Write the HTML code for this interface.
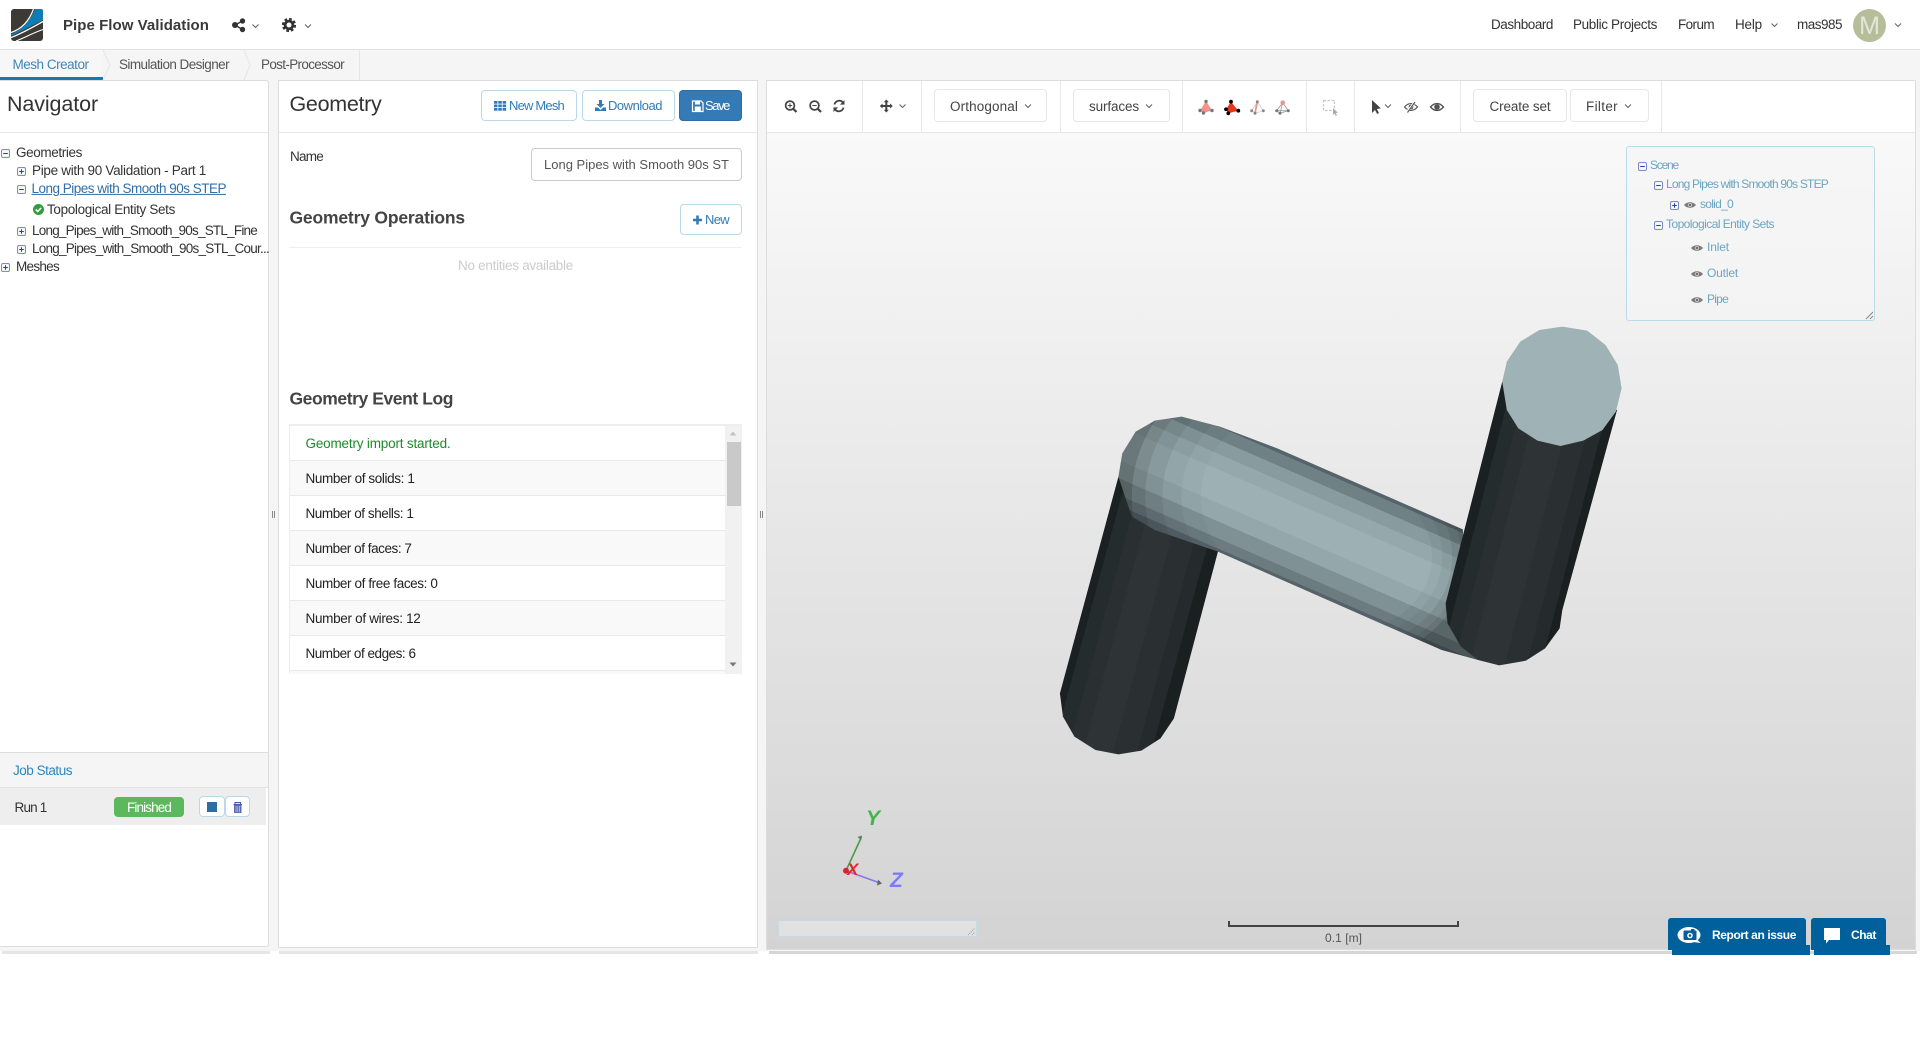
<!DOCTYPE html>
<html lang="en"><head><meta charset="utf-8"><title>Pipe Flow Validation</title>
<style>
html,body{margin:0;padding:0;background:#fff}
body{width:1920px;height:1040px;position:relative;overflow:hidden;font-family:"Liberation Sans",Arial,sans-serif;font-size:13.5px;color:#333}
.b{position:absolute;box-sizing:border-box}
.t{position:absolute;white-space:nowrap;transform:translateY(calc(-50% + 1px));line-height:1.2}
.t.n{transform:translateY(-50%)}
.btn{position:absolute;box-sizing:border-box;border:1px solid #b9d9ea;border-radius:4px;background:#fff}
.tb{position:absolute;box-sizing:border-box;border:1px solid #e8e8e8;border-radius:4px;background:#fff;top:89px;height:33px}
.blue{color:#337ab7}.st{color:#6ba5c1;font-size:12px}
.lr{position:absolute;left:290px;width:435px;height:35px;box-sizing:border-box;border-bottom:1px solid #e8e8e8}
input{position:absolute;box-sizing:border-box;left:531px;top:148px;width:211px;height:33px;border:1px solid #ccc;border-radius:4px;padding:0 0 0 12px;font:13px "Liberation Sans",Arial,sans-serif;color:#555;background:#fff;outline:0}
svg{display:block}
</style></head><body>

<!-- background zones -->
<div class="b" style="left:0;top:50px;width:1920px;height:901px;background:#f5f5f5"></div>
<div class="b" style="left:0;top:0;width:1920px;height:50px;background:#fff;border-bottom:1px solid #e3e3e3"></div>
<div class="b" style="left:0;top:50px;width:103px;height:30px;background:#f7f7f7;border-bottom:3px solid #1a78b0"></div>
<div class="b" style="left:244px;top:50px;width:1px;height:30px;background:#e6e6e6"></div>
<div class="b" style="left:359px;top:50px;width:1px;height:30px;background:#e6e6e6"></div>
<div class="b" style="left:103px;top:50px;width:1px;height:30px;background:#e6e6e6"></div>

<!-- panels -->
<div class="b" style="left:-2px;top:80px;width:271px;height:867px;background:#fff;border:1px solid #ddd;border-radius:3px"></div>
<div class="b" style="left:0;top:132px;width:268px;height:1px;background:#e8e8e8"></div>
<div class="b" style="left:278px;top:80px;width:480px;height:868px;background:#fff;border:1px solid #ddd"></div>
<div class="b" style="left:279px;top:132px;width:478px;height:1px;background:#e8e8e8"></div>
<div class="b" style="left:766px;top:80px;width:1150px;height:870px;background:#fff;border:1px solid #ddd"></div>
<div class="b" style="left:767px;top:132px;width:1148px;height:817px;background:linear-gradient(#f9f9f9,#d3d3d3);border-top:1px solid #e6e6e6"></div>
<div class="b" style="left:2px;top:951px;width:268px;height:3px;background:#e6e6e6"></div>
<div class="b" style="left:279px;top:951px;width:479px;height:3px;background:#e6e6e6"></div>
<div class="b" style="left:769px;top:951px;width:1148px;height:3px;background:#d6d6d6"></div>

<!-- header text -->
<span class="t" style="left:63px;top:25px;font-size:15px;font-weight:bold;color:#3a3a3a" data-w="146">Pipe Flow Validation</span>
<span class="t n" style="left:1491px;top:25px" data-w="62">Dashboard</span>
<span class="t n" style="left:1573px;top:25px" data-w="84">Public Projects</span>
<span class="t n" style="left:1678px;top:25px" data-w="36">Forum</span>
<span class="t n" style="left:1735px;top:25px" data-w="27">Help</span>
<span class="t n" style="left:1797px;top:25px" data-w="45">mas985</span>
<div class="b" style="left:1853px;top:9px;width:33px;height:33px;border-radius:50%;background:#b5bd9b;color:#e4e7d8;font-size:25px;line-height:34px;text-align:center">M</div>

<!-- tabs -->
<span class="t" style="left:12.5px;top:64px;color:#3f86b8" data-w="76">Mesh Creator</span>
<span class="t" style="left:119px;top:64px;color:#555" data-w="110">Simulation Designer</span>
<span class="t" style="left:261px;top:64px;color:#555" data-w="83">Post-Processor</span>

<!-- navigator -->
<span class="t n" style="left:7px;top:105px;font-size:21.5px;color:#333" data-w="91">Navigator</span>
<span class="t" style="left:16px;top:152px" data-w="66">Geometries</span>
<span class="t" style="left:32px;top:170px" data-w="174">Pipe with 90 Validation - Part 1</span>
<span class="t" style="left:31.5px;top:188px;color:#2f6fa7;text-decoration:underline" data-w="194.5">Long Pipes with Smooth 90s STEP</span>
<span class="t" style="left:47px;top:209px" data-w="128">Topological Entity Sets</span>
<span class="t" style="left:32px;top:230px" data-w="225">Long_Pipes_with_Smooth_90s_STL_Fine</span>
<span class="t" style="left:32px;top:248px" data-w="237">Long_Pipes_with_Smooth_90s_STL_Cour...</span>
<span class="t" style="left:16px;top:266px" data-w="43">Meshes</span>

<!-- job status -->
<div class="b" style="left:0;top:752px;width:268px;height:36px;background:#f5f5f5;border-top:1px solid #ddd;border-bottom:1px solid #e3e3e3"></div>
<span class="t" style="left:13px;top:770px;color:#2a86bd" data-w="59">Job Status</span>
<div class="b" style="left:0;top:788px;width:266px;height:37px;background:#eee"></div>
<span class="t" style="left:14.5px;top:806.5px" data-w="32">Run 1</span>
<div class="b" style="left:114px;top:797px;width:70px;height:20px;background:#5cb85c;border-radius:4px"></div>
<span class="t" style="left:127px;top:806.5px;color:#fff" data-w="44">Finished</span>
<div class="btn" style="left:199px;top:796px;width:26px;height:21px"></div>
<div class="btn" style="left:225px;top:796px;width:25px;height:21px"></div>
<div class="b" style="left:207px;top:802px;width:10px;height:10px;background:#2e6da4"></div>

<!-- geometry panel -->
<span class="t n" style="left:289.5px;top:105px;font-size:21.5px;color:#333" data-w="92">Geometry</span>
<div class="btn" style="left:481px;top:90px;width:96px;height:31px"></div>
<span class="t blue n" style="left:509px;top:106px;font-size:13px" data-w="55">New Mesh</span>
<div class="btn" style="left:582px;top:90px;width:93px;height:31px"></div>
<span class="t blue n" style="left:608px;top:106px;font-size:13px" data-w="54">Download</span>
<div class="btn" style="left:679px;top:90px;width:63px;height:31px;background:#337ab7;border-color:#2e6da4"></div>
<span class="t n" style="left:705px;top:106px;font-size:13px;color:#fff" data-w="24">Save</span>
<span class="t" style="left:290px;top:156px" data-w="33">Name</span>
<input type="text" value="Long Pipes with Smooth 90s ST" readonly>
<span class="t" style="left:289.5px;top:217px;font-size:17.5px;font-weight:bold;color:#444" data-w="175.5">Geometry Operations</span>
<div class="btn" style="left:680px;top:204px;width:62px;height:31px"></div>
<span class="t blue n" style="left:705px;top:220px;font-size:13px" data-w="24">New</span>
<div class="b" style="left:289px;top:247px;width:453px;height:1px;background:#eee"></div>
<span class="t" style="left:458px;top:265px;color:#ccc" data-w="115">No entities available</span>
<span class="t" style="left:289.5px;top:398px;font-size:17.5px;font-weight:bold;color:#444" data-w="163.5">Geometry Event Log</span>

<!-- log list -->
<div class="b" style="left:289px;top:424px;width:453px;height:250px;background:#f1f1f1;border-top:2px solid #eee;border-left:1px solid #eee;overflow:hidden">
<div class="lr" style="left:0;top:0;background:#fff"></div>
<div class="lr" style="left:0;top:35px;background:#f9f9f9"></div>
<div class="lr" style="left:0;top:70px;background:#fff"></div>
<div class="lr" style="left:0;top:105px;background:#f9f9f9"></div>
<div class="lr" style="left:0;top:140px;background:#fff"></div>
<div class="lr" style="left:0;top:175px;background:#f9f9f9"></div>
<div class="lr" style="left:0;top:210px;background:#fff"></div>
<div class="lr" style="left:0;top:245px;background:#f9f9f9"></div>
<div class="b" style="left:437px;top:16px;width:14px;height:64px;background:#c9c9c9"></div>
</div>
<span class="t" style="left:305.5px;top:443px;color:#1e8a2e" data-w="145">Geometry import started.</span>
<span class="t" style="left:305.5px;top:478px;color:#222" data-w="109">Number of solids: 1</span>
<span class="t" style="left:305.5px;top:513px;color:#222" data-w="108">Number of shells: 1</span>
<span class="t" style="left:305.5px;top:548px;color:#222" data-w="106">Number of faces: 7</span>
<span class="t" style="left:305.5px;top:583px;color:#222" data-w="132">Number of free faces: 0</span>
<span class="t" style="left:305.5px;top:618px;color:#222" data-w="115">Number of wires: 12</span>
<span class="t" style="left:305.5px;top:653px;color:#222" data-w="110">Number of edges: 6</span>

<!-- toolbar -->
<div class="b" style="left:862px;top:81px;width:1px;height:51px;background:#e8e8e8"></div>
<div class="b" style="left:921px;top:81px;width:1px;height:51px;background:#e8e8e8"></div>
<div class="b" style="left:1060px;top:81px;width:1px;height:51px;background:#e8e8e8"></div>
<div class="b" style="left:1182px;top:81px;width:1px;height:51px;background:#e8e8e8"></div>
<div class="b" style="left:1306px;top:81px;width:1px;height:51px;background:#e8e8e8"></div>
<div class="b" style="left:1354px;top:81px;width:1px;height:51px;background:#e8e8e8"></div>
<div class="b" style="left:1460px;top:81px;width:1px;height:51px;background:#e8e8e8"></div>
<div class="b" style="left:1661px;top:81px;width:1px;height:51px;background:#e8e8e8"></div>
<div class="tb" style="left:934px;width:113px"></div>
<span class="t" style="left:950px;top:106px;color:#444" data-w="68">Orthogonal</span>
<div class="tb" style="left:1073px;width:97px"></div>
<span class="t" style="left:1089px;top:106px;color:#444" data-w="50">surfaces</span>
<div class="tb" style="left:1473px;width:94px"></div>
<span class="t" style="left:1489.5px;top:106px;color:#444" data-w="61">Create set</span>
<div class="tb" style="left:1570px;width:79px"></div>
<span class="t" style="left:1586px;top:106px;color:#444" data-w="32">Filter</span>

<!-- scene tree box -->
<div class="b" style="left:1625.5px;top:146px;width:249px;height:175px;border:1px solid #b8dce8;border-radius:3px;background:rgba(245,245,245,.6)"></div>
<span class="t st n" style="left:1650px;top:165px" data-w="28">Scene</span>
<span class="t st n" style="left:1666px;top:184px" data-w="162">Long Pipes with Smooth 90s STEP</span>
<span class="t st n" style="left:1700px;top:204px" data-w="33">solid_0</span>
<span class="t st n" style="left:1666px;top:224px" data-w="108">Topological Entity Sets</span>
<span class="t st n" style="left:1707px;top:247px" data-w="22">Inlet</span>
<span class="t st n" style="left:1707px;top:273px" data-w="31">Outlet</span>
<span class="t st n" style="left:1707px;top:299px" data-w="21">Pipe</span>

<!-- lower-left text box in viewport -->
<div class="b" style="left:778px;top:920px;width:199px;height:17px;background:#e1e1e1;border:1px solid #c6dbe3"></div>

<!-- scale -->
<span class="t n" style="left:1325px;top:938px;font-size:12px;color:#555" data-w="37">0.1 [m]</span>

<!-- report buttons -->
<div class="b" style="left:1672px;top:945px;width:138px;height:10px;background:#00609c"></div>
<div class="b" style="left:1668px;top:918px;width:138px;height:32px;background:#00609c;border-radius:3px 3px 0 0"></div>
<div class="b" style="left:1814px;top:945px;width:76px;height:10px;background:#00609c"></div>
<div class="b" style="left:1811px;top:918px;width:75px;height:32px;background:#00609c;border-radius:3px 3px 0 0"></div>
<span class="t n" style="left:1712px;top:935px;font-size:12px;font-weight:bold;color:#fff" data-w="84">Report an issue</span>
<span class="t n" style="left:1851px;top:935px;font-size:12px;font-weight:bold;color:#fff" data-w="25">Chat</span>

<!-- graphics layer -->
<svg width="1920" height="1040" viewBox="0 0 1920 1040" style="position:absolute;left:0;top:0;pointer-events:none">
<defs>
<g id="pl"><rect x=".5" y=".5" width="8" height="8" rx="1.5" fill="#f3f5fb" stroke="#7f8bc9"/><path d="M2.2 4.5h4.6M4.5 2.2v4.6" stroke="#2c3f9e" stroke-width="1"/></g>
<g id="mi"><rect x=".5" y=".5" width="8" height="8" rx="1.5" fill="#f3f5fb" stroke="#7f8bc9"/><path d="M2.2 4.5h4.6" stroke="#2c3f9e" stroke-width="1"/></g>
<g id="ey"><path d="M0 3.5C3 -.2 9 -.2 12 3.5 9 7.2 3 7.2 0 3.5Z" fill="#7c7c7c"/><circle cx="6" cy="3.5" r="2" fill="#c9c9c9"/><circle cx="6" cy="3.5" r="1.1" fill="#666"/></g>
<path id="ch" d="M0 0L3 3 6 0" fill="none" stroke="#666" stroke-width="1.1"/>
<linearGradient id="lc" gradientUnits="userSpaceOnUse" x1="205" y1="500" x2="501" y2="570">
<stop offset="0" stop-color="#1b2122"/><stop offset=".07" stop-color="#1b2122"/><stop offset=".07" stop-color="#252c2d"/><stop offset=".2" stop-color="#252c2d"/><stop offset=".2" stop-color="#2a3031"/><stop offset=".33" stop-color="#2a3031"/><stop offset=".33" stop-color="#2e3336"/><stop offset=".58" stop-color="#2e3336"/><stop offset=".58" stop-color="#2a3031"/><stop offset=".78" stop-color="#2a3031"/><stop offset=".78" stop-color="#252b2c"/><stop offset=".9" stop-color="#252b2c"/><stop offset=".9" stop-color="#1a1f20"/><stop offset="1" stop-color="#1a1f20"/></linearGradient>
<linearGradient id="rc" gradientUnits="userSpaceOnUse" x1="1210" y1="215" x2="1511" y2="283">
<stop offset="0" stop-color="#1b2122"/><stop offset=".08" stop-color="#1b2122"/><stop offset=".08" stop-color="#252c2d"/><stop offset=".2" stop-color="#252c2d"/><stop offset=".2" stop-color="#2a3031"/><stop offset=".33" stop-color="#2a3031"/><stop offset=".33" stop-color="#2e3336"/><stop offset=".62" stop-color="#2e3336"/><stop offset=".62" stop-color="#2a3031"/><stop offset=".8" stop-color="#2a3031"/><stop offset=".8" stop-color="#252b2c"/><stop offset=".92" stop-color="#252b2c"/><stop offset=".92" stop-color="#1a1f20"/><stop offset="1" stop-color="#1a1f20"/></linearGradient>
<linearGradient id="pp" gradientUnits="userSpaceOnUse" x1="620" y1="415" x2="464" y2="727">
<stop offset="0" stop-color="#55636a"/><stop offset=".03" stop-color="#55636a"/><stop offset=".03" stop-color="#6f8185"/><stop offset=".13" stop-color="#6f8185"/><stop offset=".13" stop-color="#889b9e"/><stop offset=".24" stop-color="#889b9e"/><stop offset=".24" stop-color="#95a9ad"/><stop offset=".36" stop-color="#95a9ad"/><stop offset=".36" stop-color="#9db1b5"/><stop offset=".62" stop-color="#9db1b5"/><stop offset=".62" stop-color="#94a8ab"/><stop offset=".76" stop-color="#94a8ab"/><stop offset=".76" stop-color="#7f9195"/><stop offset=".89" stop-color="#7f9195"/><stop offset=".89" stop-color="#6b7b7e"/><stop offset=".97" stop-color="#6b7b7e"/><stop offset=".97" stop-color="#55626a"/><stop offset="1" stop-color="#55626a"/></linearGradient>
<radialGradient id="bl" gradientUnits="userSpaceOnUse" cx="700" cy="560" r="500">
<stop offset=".56" stop-color="#000" stop-opacity="0"/><stop offset=".56" stop-color="#000" stop-opacity=".03"/><stop offset=".66" stop-color="#000" stop-opacity=".03"/><stop offset=".66" stop-color="#000" stop-opacity=".07"/><stop offset=".76" stop-color="#000" stop-opacity=".07"/><stop offset=".76" stop-color="#000" stop-opacity=".13"/><stop offset=".85" stop-color="#000" stop-opacity=".13"/><stop offset=".85" stop-color="#000" stop-opacity=".21"/><stop offset=".92" stop-color="#000" stop-opacity=".21"/><stop offset=".92" stop-color="#000" stop-opacity=".32"/><stop offset="1" stop-color="#000" stop-opacity=".32"/></radialGradient>
<radialGradient id="br" gradientUnits="userSpaceOnUse" cx="800" cy="740" r="330">
<stop offset=".68" stop-color="#000" stop-opacity="0"/><stop offset=".68" stop-color="#000" stop-opacity=".04"/><stop offset=".76" stop-color="#000" stop-opacity=".04"/><stop offset=".76" stop-color="#000" stop-opacity=".08"/><stop offset=".84" stop-color="#000" stop-opacity=".08"/><stop offset=".84" stop-color="#000" stop-opacity=".14"/><stop offset=".91" stop-color="#000" stop-opacity=".14"/><stop offset=".91" stop-color="#000" stop-opacity=".2"/><stop offset=".96" stop-color="#000" stop-opacity=".2"/><stop offset=".96" stop-color="#000" stop-opacity=".3"/><stop offset="1" stop-color="#000" stop-opacity=".3"/></radialGradient>
</defs>

<!-- logo -->
<rect x="11" y="9" width="32" height="32" rx="3" fill="#3d3935"/>
<path d="M11 34C22 30 30 21 35 9H41Q43 9 43 11V20C33 25 22 31 11 36Z" fill="#0f7cb3"/>
<path d="M11 32.5C22 29 29.5 20 33.5 9" fill="none" stroke="#fff" stroke-width="1.2"/>
<path d="M11 37.5C22 33.5 33 27 43 21.5" fill="none" stroke="#fff" stroke-width="1.3"/>
<path d="M16 41C25 37.5 34 32.5 43 29.5" fill="none" stroke="#fff" stroke-width="1.1"/>

<!-- share + gear -->
<g fill="#333"><circle cx="242.5" cy="21" r="2.7"/><circle cx="242.5" cy="29.5" r="2.7"/><circle cx="235" cy="25" r="3"/></g>
<path d="M235 25L242.5 21M235 25L242.5 29.5" stroke="#333" stroke-width="1.4"/>
<use href="#ch" x="252.5" y="24.5"/>
<circle cx="289" cy="25" r="3.9" fill="none" stroke="#333" stroke-width="2.8"/>
<circle cx="289" cy="25" r="6" fill="none" stroke="#333" stroke-width="2.2" stroke-dasharray="2.7 2"/>
<use href="#ch" x="305" y="24.5"/>
<use href="#ch" x="1771.5" y="23.5" />
<use href="#ch" x="1895" y="23.5"/>

<!-- tab chevrons -->
<path d="M103 50L110 65 103 80" fill="#f5f5f5" stroke="#e6e6e6"/>
<path d="M244 50L250 65 244 80" fill="#f5f5f5" stroke="#e6e6e6"/>

<!-- navigator tree icons -->
<use href="#mi" x="1" y="149"/><use href="#pl" x="17" y="167"/><use href="#mi" x="17" y="185"/>
<use href="#pl" x="17" y="227"/><use href="#pl" x="17" y="245"/><use href="#pl" x="1" y="263"/>
<circle cx="38.5" cy="209.5" r="5.5" fill="#2e9e3f"/><path d="M35.7 209.5l2 2 3.4-3.6" fill="none" stroke="#fff" stroke-width="1.6"/>

<!-- job trash -->
<path d="M233.5 804.5h8.5M235 804v-1.4h5.5v1.4" fill="none" stroke="#4a5aa5" stroke-width="1.1"/>
<rect x="234" y="805" width="7.5" height="8" fill="#5b6bb0"/><path d="M236 806v6M237.8 806v6M239.6 806v6" stroke="#c7cde6" stroke-width=".7"/>

<!-- button icons -->
<g fill="#337ab7"><rect x="494" y="101" width="3.5" height="2.7"/><rect x="498.3" y="101" width="3.5" height="2.7"/><rect x="502.6" y="101" width="3.5" height="2.7"/><rect x="494" y="104.5" width="3.5" height="2.7"/><rect x="498.3" y="104.5" width="3.5" height="2.7"/><rect x="502.6" y="104.5" width="3.5" height="2.7"/><rect x="494" y="108" width="3.5" height="2.7"/><rect x="498.3" y="108" width="3.5" height="2.7"/><rect x="502.6" y="108" width="3.5" height="2.7"/></g>
<path d="M599 100h3v4h2.5l-4 4-4-4H599zM595 107.5h3l2.5 2.5 2.5-2.5h3v3.5h-11z" fill="#337ab7"/>
<path d="M692.5 101h8.5l2 2v8.5h-10.5z" fill="none" stroke="#fff" stroke-width="1.2"/><rect x="695" y="101.5" width="5" height="3" fill="#fff"/><rect x="694.8" y="106.5" width="6" height="4.5" fill="#fff"/>
<path d="M693 220h9M697.5 215.5v9" stroke="#337ab7" stroke-width="2.6"/>

<!-- log scroll arrows -->
<path d="M733 431.5l3.5 4h-7z" fill="#c4c4c4"/><path d="M733 666.5l-3.5-4h7z" fill="#777"/>

<!-- splitters -->
<path d="M272.5 511v7M274.5 511v7M760.5 511v7M762.5 511v7" stroke="#888" stroke-width="1"/>

<!-- toolbar icons -->
<g fill="none" stroke="#444">
<circle cx="790" cy="105.5" r="4.4" stroke-width="1.7"/><path d="M793.3 108.8l3.2 3.2" stroke-width="2.2"/><path d="M787.8 105.5h4.4M790 103.3v4.4" stroke-width="1"/>
<circle cx="814.5" cy="105.5" r="4.4" stroke-width="1.7"/><path d="M817.8 108.8l3.2 3.2" stroke-width="2.2"/><path d="M812.3 105.5h4.4" stroke-width="1"/>
<path d="M834.5 104.5a4.8 4.8 0 0 1 8.3-2.2M843.5 107.5a4.8 4.8 0 0 1-8.3 2.2" stroke-width="1.8"/>
<path d="M881 106h10.5M886.3 101v10.5" stroke-width="2"/>
</g>
<path d="M844.5 100v4.6h-4.6zM833.5 112v-4.6h4.6z" fill="#444"/>
<path d="M886.3 99.5l2.5 2.8h-5zM886.3 112.5l-2.5-2.8h5zM879.8 106l2.8-2.5v5zM892.8 106l-2.8 2.5v-5z" fill="#444"/>
<use href="#ch" x="899.5" y="104.5"/>
<use href="#ch" x="1025" y="104.5"/><use href="#ch" x="1146" y="104.5"/><use href="#ch" x="1625" y="104.5"/>

<!-- tetra icons -->
<g><path d="M1206 101L1200 110.5 1203.5 113 1212 110.5Z" fill="#f1938a"/><g fill="#777"><circle cx="1206" cy="101.5" r="1.7"/><circle cx="1200" cy="110.5" r="1.7"/><circle cx="1203.5" cy="113" r="1.7"/><circle cx="1212" cy="110.5" r="1.7"/></g></g>
<g><path d="M1231 101.7L1226 109.3 1228.3 113.3 1238.3 110.7Z" fill="#e8361f"/><g fill="#000"><circle cx="1231" cy="101.7" r="1.9"/><circle cx="1226" cy="109.3" r="1.9"/><circle cx="1228.3" cy="113.3" r="1.9"/><circle cx="1238.3" cy="110.7" r="1.9"/></g></g>
<g><path d="M1257.3 101.7L1251.7 110.7 1255 113.3 1263.3 110.7Z" fill="#fff" stroke="#cfcfcf" stroke-width=".8"/><path d="M1257.3 101.7L1255 113.3" stroke="#f1938a" stroke-width="1.8"/><g fill="#888"><circle cx="1257.3" cy="101.7" r="1.5"/><circle cx="1251.7" cy="110.7" r="1.5"/><circle cx="1255" cy="113.3" r="1.5"/><circle cx="1263.3" cy="110.7" r="1.5"/></g></g>
<g><path d="M1282.7 102.7L1276.7 110.7 1280 113.3 1288.3 110.7ZM1276.7 110.7H1288.3M1282.7 102.7L1280 113.3" fill="none" stroke="#999" stroke-width=".8"/><g fill="#777"><circle cx="1276.7" cy="110.7" r="1.5"/><circle cx="1280" cy="113.3" r="1.5"/><circle cx="1288.3" cy="110.7" r="1.5"/></g><circle cx="1282.7" cy="102.7" r="2.3" fill="#f1938a"/></g>
<rect x="1323.5" y="100.5" width="11" height="10" fill="none" stroke="#c4c4c4" stroke-width="1.2" stroke-dasharray="2.5 1.5"/><path d="M1333 108l0 7 1.6-1.5 1.2 2.4 1.2-.6-1.2-2.3 2-.3z" fill="#aaa"/>
<path d="M1372 100l0 13 3-3 2.2 4 1.8-1-2.1-4 4-.6z" fill="#444"/>
<use href="#ch" x="1385" y="104.5"/>
<path d="M1404.5 107c4-4.6 9-4.6 13 0-4 4.6-9 4.6-13 0z" fill="none" stroke="#555" stroke-width="1.2"/><circle cx="1411" cy="107" r="2.4" fill="#555"/><path d="M1407 112L1415 102" stroke="#fff" stroke-width="2.4"/><path d="M1407.5 112.5L1415 102" stroke="#555" stroke-width="1.1"/>
<path d="M1430.5 107c4-4.6 9-4.6 13 0-4 4.6-9 4.6-13 0z" fill="none" stroke="#555" stroke-width="1.4"/><circle cx="1437" cy="107" r="2.8" fill="#555"/>

<!-- scene tree icons -->
<use href="#mi" x="1638" y="162"/><use href="#mi" x="1654" y="181"/><use href="#pl" x="1670" y="201"/>
<use href="#ey" x="1684" y="201.5"/><use href="#mi" x="1654" y="221"/>
<use href="#ey" x="1691" y="244.5"/><use href="#ey" x="1691" y="270.5"/><use href="#ey" x="1691" y="296.5"/>
<path d="M1866 319l7-7M1870 319l3-3" stroke="#888" stroke-width="1"/>
<path d="M968 935l7-7M972 935l3-3" stroke="#999" stroke-width="1" stroke-dasharray="1 1"/>

<!-- 3D pipe -->
<svg x="1040" y="310" width="600" height="460" viewBox="0 0 1568 1380" preserveAspectRatio="none">
<polygon fill="url(#lc)" points="205,500 52,1150 60,1220 90,1280 145,1320 205,1333 265,1322 315,1285 350,1225 465,725 400,560"/>
<polygon fill="url(#pp)" points="205,500 215,430 250,365 300,332 370,320 470,350 620,415 1105,658 1110,760 1075,900 1145,1050 1050,1020 900,945 465,725 300,660 240,620"/>
<polygon fill="url(#bl)" points="205,500 215,430 250,365 300,332 370,320 470,350 620,415 700,455 545,765 465,725 300,660 240,620"/>
<polygon fill="url(#br)" points="900,555 1105,658 1110,760 1075,900 1145,1050 1050,1020 900,945 744,866"/>
<polygon fill="url(#rc)" points="1208,215 1060,880 1065,940 1100,1010 1145,1050 1200,1066 1270,1052 1320,1015 1358,955 1365,900 1508,300"/>
<polygon fill="#9fb2b5" points="1365,50 1430,62 1478,105 1510,165 1520,235 1505,305 1470,360 1420,392 1360,408 1300,392 1250,355 1220,300 1208,215 1220,155 1255,95 1305,60"/>
</svg>

<!-- axes -->
<path d="M846 870.7L861.5 837" stroke="#4a9a4a" stroke-width="1.6"/><path d="M862 835.5l-4.5 1.5 3.5 3z" fill="#5c7f5c"/>
<path d="M846 870.7L880 883" stroke="#7b7bef" stroke-width="1.6"/><path d="M882 883.5l-4-4-1 6z" fill="#666"/>
<circle cx="846" cy="870.7" r="3" fill="#d8252c"/>
<text x="847" y="875" font-family="Liberation Sans" font-weight="bold" font-style="italic" font-size="17" fill="#e8232a">X</text>
<text x="866" y="825" font-family="Liberation Sans" font-weight="bold" font-style="italic" font-size="21" fill="#3fb54a">Y</text>
<text x="890" y="887" font-family="Liberation Sans" font-weight="bold" font-style="italic" font-size="21" fill="#7b7bff">Z</text>

<!-- scale bar -->
<path d="M1229 921v5h229v-5" fill="none" stroke="#444" stroke-width="2"/>

<!-- report icons -->
<ellipse cx="1689" cy="935" rx="11.5" ry="8" fill="#fff"/><path d="M1696 939l5 4-8-1z" fill="#fff"/>
<rect x="1683.5" y="930.5" width="13" height="9.5" rx="1" fill="#00609c"/><rect x="1691" y="929" width="3.5" height="2" fill="#00609c"/><circle cx="1690" cy="935.5" r="2.8" fill="#fff"/><circle cx="1690" cy="935.5" r="1.3" fill="#00609c"/>
<path d="M1824 928h16v12h-11l-3 3.5v-3.5h-2z" fill="#fff"/>
</svg>

<script>
document.querySelectorAll('.t[data-w]').forEach(function(e){var w=parseFloat(e.getAttribute('data-w')),a=e.getBoundingClientRect().width,n=e.textContent.length;e.style.letterSpacing=((w-a)/n).toFixed(3)+'px';});
</script>
</body></html>
